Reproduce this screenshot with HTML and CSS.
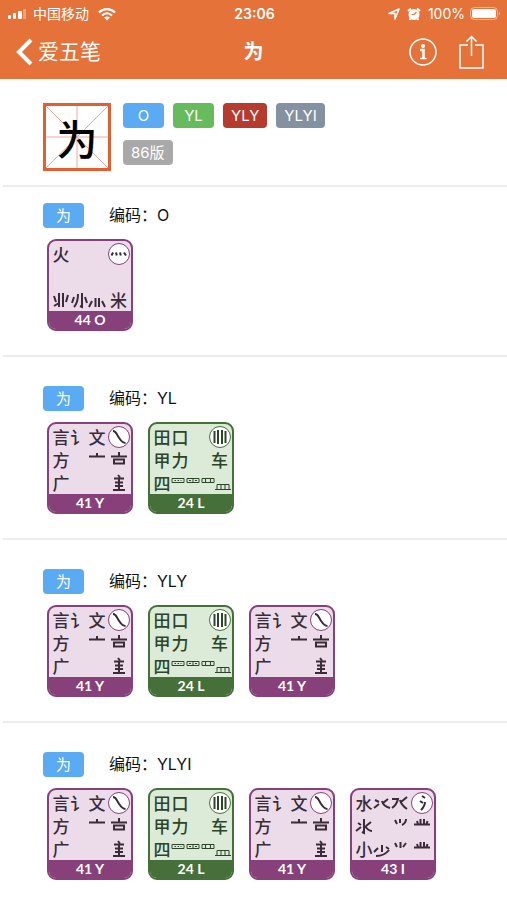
FILE: index.html
```html
<!DOCTYPE html>
<html lang="zh-CN">
<head>
    <meta charset="UTF-8">
    <meta name="viewport" content="width=device-width, initial-scale=1.0">
    <title>爱五笔 - 为</title>
    <link rel="stylesheet" href="styles.css">
</head>
<body>
    <!-- root shapes that have no character of their own -->
    <svg class="sprite" aria-hidden="true">
        <symbol id="dot4" viewBox="1 1 20 20"><path d="M3.500 12.500l1.500-3M8 9.500l.8 3M12 9.500l.8 3M16 9.500l2 3"/></symbol>
        <symbol id="na" viewBox="1 1 20 20"><path d="M5 5c3 0 3.500 3 5.500 6s3.500 6 7 6"/></symbol>
        <symbol id="bars4" viewBox="1 1 20 20"><path d="M5.500 5v12M9 4v14M13 4v14M16.500 5v12"/></symbol>
        <symbol id="water3" viewBox="1 1 20 20"><path d="M11 4l3 2M9 9l3 2M14 10c0 4-2 6-4 8"/></symbol>
        <symbol id="ye" viewBox="0 0 18 18"><path d="M2 5l2 6M7 2v14M11 2v14M16 4l-2 7M7 12L2 15"/></symbol>
        <symbol id="xiaoLeft" viewBox="0 0 18 18"><path d="M4 6l-2 6M8 3c0 7-1 10-4 13M12 2v14l-2-1M15 6l2 6"/></symbol>
        <symbol id="dotsLow" viewBox="0 0 18 18"><path d="M4 10l-3 6M7.500 7v9M11 7v9M14 10l3 6"/></symbol>
        <symbol id="tou" viewBox="0 0 18 18"><path d="M9 2v3M1 5.500h16"/></symbol>
        <symbol id="touKou" viewBox="0 0 18 18"><path d="M9 1v4M1 5.500h16M4 8.500h10v4h-10z"/></symbol>
        <symbol id="zhu" viewBox="0 0 18 18"><path d="M8 1l2 2.500M9 4v12M4 4.500h10M5 8.500h8M5 12h8M3 16h12"/></symbol>
        <symbol id="boxes" viewBox="0 0 61 18">
            <path class="thin" d="M1 4.500h12v4H1zM3.500 6.500h1.500M6.500 6.500h1.500M9.500 6.500h1M16 4.500h12v4H16zM22 4.500v4M18 6.500h2M24 6.500h2M31 4.500h12v4H31zM34.500 4.500v4M39.500 4.500v4"/>
            <path class="thin" d="M44 15.500h16M46 15V10.500h12V15M50 10.500V15M54 10.500V15"/>
        </symbol>
        <symbol id="shuiA" viewBox="0 0 18 18"><path d="M2 6l4 2M1 14l5-4M15 5l-5 4M9 7c1 4 4 6 8 7"/></symbol>
        <symbol id="shuiB" viewBox="0 0 18 18"><path d="M1 5h6c-1 4-3 7-6 9M16 3l-6 5M9 6c1 4 4 7 7 9"/></symbol>
        <symbol id="shuiC" viewBox="0 0 18 18"><path d="M9 2v14l-2-1M3 6l3 2M1 14l5-4M16 5l-5 4M10 9c2 3 4 5 7 5"/></symbol>
        <symbol id="dots3" viewBox="0 0 18 18"><path d="M4 3l2 4M9 2v4M15 2c0 3-2 5-4 6"/></symbol>
        <symbol id="dots3b" viewBox="0 0 18 18"><path d="M4 3l2 4M9.500 2v6M15 3l-3 4"/></symbol>
        <symbol id="xing" viewBox="0 0 18 18"><path d="M4 4l1 3M7.500 2v5M11 2v5M14.500 4l-1 3M1 7.500h16"/></symbol>
        <symbol id="shao" viewBox="0 0 18 18"><path d="M9 5v7M5 8l-4 4M13 7l3 2M16 10c-3 4-7 6-13 6"/></symbol>
    </svg>

    <header class="header">
        <div class="status">
            <div class="status-side">
                <svg width="20" height="12" viewBox="0 0 20 12" fill="#fff">
                    <rect x="0" y="7" width="3" height="4" rx="1"/>
                    <rect x="5" y="5" width="3" height="6" rx="1"/>
                    <rect x="10" y="3" width="4" height="8" rx="1"/>
                    <rect x="15" y="1" width="3" height="10" rx="1" opacity=".35"/>
                </svg>
                <span>中国移动</span>
                <svg class="wifi" width="18" height="14" viewBox="0 0 18 14" fill="none" stroke="#fff" stroke-width="2.200">
                    <path d="M1 5.500c4.500-4.500 11.500-4.500 16 0M4 8.500c3-3 7-3 10 0"/>
                    <path d="M9 13.500L6 10.500q3-2 6 0z" fill="#fff" stroke="none"/>
                </svg>
            </div>
            <span class="time">23:06</span>
            <div class="status-side right">
                <svg width="12" height="12" viewBox="0 0 12 12" fill="none" stroke="#fff" stroke-width="1.500" stroke-linejoin="round">
                    <path d="M11 1L7 11V5.500H1z"/>
                </svg>
                <svg class="alarm" width="14" height="14" viewBox="0 0 14 14">
                    <circle cx="7" cy="7.500" r="5.500" fill="#fff"/>
                    <path d="M1 4l3-2.500M13 4l-3-2.500M3.500 11.500L2.500 13M10.500 11.500l1 1.500" stroke="#fff" stroke-width="2"/>
                    <path d="M9.500 5L7 7.500H4.500" fill="none" stroke="#e57239" stroke-width="1.200"/>
                </svg>
                <span>100%</span>
                <svg width="31" height="14" viewBox="0 0 31 14">
                    <rect x=".5" y=".5" width="27" height="12" rx="4" fill="none" stroke="#fff" opacity=".5"/>
                    <rect x="2" y="2" width="24" height="9" rx="2" fill="#fff"/>
                    <path d="M29 4.500q2 2 0 4z" fill="#fff" opacity=".6"/>
                </svg>
            </div>
        </div>
        <nav class="nav">
            <a class="back" href="#">
                <svg width="18" height="28" viewBox="0 0 18 28" fill="none" stroke="#fff" stroke-width="4">
                    <path d="M16 2L4 14l12 12"/>
                </svg>
                爱五笔
            </a>
            <h1 class="title">为</h1>
            <div class="actions">
                <button type="button" aria-label="信息">
                    <svg width="28" height="34" viewBox="0 0 28 34" fill="none" stroke="#fff">
                        <circle cx="14" cy="17" r="13" stroke-width="1.500"/>
                        <circle cx="14" cy="11" r="2" fill="#fff" stroke="none"/>
                        <path d="M11 15h3.500V23" stroke-width="2.500"/>
                        <path d="M11 23.500h6.500" stroke-width="1.500"/>
                    </svg>
                </button>
                <button type="button" aria-label="分享">
                    <svg width="26" height="34" viewBox="0 0 26 34" fill="none" stroke="#fff" stroke-width="1.500">
                        <path d="M9 10H1v23h23V10h-8M12.500 21V2M7.500 6.500l5-5 5 5"/>
                    </svg>
                </button>
            </div>
        </nav>
    </header>

    <main>
        <section class="summary">
            <div class="char-box">
                <svg viewBox="0 0 62 62" fill="none" stroke="#f0aaa2">
                    <path d="M0 31h62M31 0v62M0 0l62 62M62 0L0 62"/>
                </svg>
                <span>为</span>
            </div>
            <div class="tags">
                <div class="tag-row">
                    <span class="tag blue">O</span>
                    <span class="tag green">YL</span>
                    <span class="tag red">YLY</span>
                    <span class="tag slate">YLYI</span>
                </div>
                <div class="tag-row">
                    <span class="tag gray">86版</span>
                </div>
            </div>
        </section>

        <section class="code first">
            <h2 class="code-title"><span class="tag blue">为</span>编码：O</h2>
            <div class="keys">
                <div class="key purple">
                    <div class="face">
                        <span>火</span><i></i><i></i><svg class="stroke"><use href="#dot4"/></svg>
                        <i></i><i></i><i></i><i></i>
                        <svg><use href="#ye"/></svg><svg><use href="#xiaoLeft"/></svg><svg><use href="#dotsLow"/></svg><span>米</span>
                    </div>
                    <div class="foot">44 O</div>
                </div>
            </div>
        </section>

        <section class="code">
            <h2 class="code-title"><span class="tag blue">为</span>编码：YL</h2>
            <div class="keys">
                <div class="key purple">
                    <div class="face">
                        <span>言</span><span>讠</span><span>文</span><svg class="stroke"><use href="#na"/></svg>
                        <span>方</span><i></i><svg><use href="#tou"/></svg><svg><use href="#touKou"/></svg>
                        <span>广</span><i></i><i></i><svg><use href="#zhu"/></svg>
                    </div>
                    <div class="foot">41 Y</div>
                </div>
                <div class="key leaf">
                    <div class="face">
                        <span>田</span><span>口</span><i></i><svg class="stroke"><use href="#bars4"/></svg>
                        <span>甲</span><span>力</span><i></i><span>车</span>
                        <span>四</span><svg class="wide"><use href="#boxes"/></svg>
                    </div>
                    <div class="foot">24 L</div>
                </div>
            </div>
        </section>

        <section class="code">
            <h2 class="code-title"><span class="tag blue">为</span>编码：YLY</h2>
            <div class="keys">
                <div class="key purple">
                    <div class="face">
                        <span>言</span><span>讠</span><span>文</span><svg class="stroke"><use href="#na"/></svg>
                        <span>方</span><i></i><svg><use href="#tou"/></svg><svg><use href="#touKou"/></svg>
                        <span>广</span><i></i><i></i><svg><use href="#zhu"/></svg>
                    </div>
                    <div class="foot">41 Y</div>
                </div>
                <div class="key leaf">
                    <div class="face">
                        <span>田</span><span>口</span><i></i><svg class="stroke"><use href="#bars4"/></svg>
                        <span>甲</span><span>力</span><i></i><span>车</span>
                        <span>四</span><svg class="wide"><use href="#boxes"/></svg>
                    </div>
                    <div class="foot">24 L</div>
                </div>
                <div class="key purple">
                    <div class="face">
                        <span>言</span><span>讠</span><span>文</span><svg class="stroke"><use href="#na"/></svg>
                        <span>方</span><i></i><svg><use href="#tou"/></svg><svg><use href="#touKou"/></svg>
                        <span>广</span><i></i><i></i><svg><use href="#zhu"/></svg>
                    </div>
                    <div class="foot">41 Y</div>
                </div>
            </div>
        </section>

        <section class="code">
            <h2 class="code-title"><span class="tag blue">为</span>编码：YLYI</h2>
            <div class="keys">
                <div class="key purple">
                    <div class="face">
                        <span>言</span><span>讠</span><span>文</span><svg class="stroke"><use href="#na"/></svg>
                        <span>方</span><i></i><svg><use href="#tou"/></svg><svg><use href="#touKou"/></svg>
                        <span>广</span><i></i><i></i><svg><use href="#zhu"/></svg>
                    </div>
                    <div class="foot">41 Y</div>
                </div>
                <div class="key leaf">
                    <div class="face">
                        <span>田</span><span>口</span><i></i><svg class="stroke"><use href="#bars4"/></svg>
                        <span>甲</span><span>力</span><i></i><span>车</span>
                        <span>四</span><svg class="wide"><use href="#boxes"/></svg>
                    </div>
                    <div class="foot">24 L</div>
                </div>
                <div class="key purple">
                    <div class="face">
                        <span>言</span><span>讠</span><span>文</span><svg class="stroke"><use href="#na"/></svg>
                        <span>方</span><i></i><svg><use href="#tou"/></svg><svg><use href="#touKou"/></svg>
                        <span>广</span><i></i><i></i><svg><use href="#zhu"/></svg>
                    </div>
                    <div class="foot">41 Y</div>
                </div>
                <div class="key purple">
                    <div class="face">
                        <span>水</span><svg><use href="#shuiA"/></svg><svg><use href="#shuiB"/></svg><svg class="stroke"><use href="#water3"/></svg>
                        <svg><use href="#shuiC"/></svg><i></i><svg><use href="#dots3"/></svg><svg><use href="#xing"/></svg>
                        <span>小</span><svg><use href="#shao"/></svg><svg><use href="#dots3b"/></svg><svg><use href="#xing"/></svg>
                    </div>
                    <div class="foot">43 I</div>
                </div>
            </div>
        </section>
    </main>
</body>
</html>
```

FILE: styles.css
```css
* {
    box-sizing: border-box;
}
body {
    margin: 0;
    background-color: #fff;
    color: #111;
    font-family: Inter, "Noto Sans CJK SC", sans-serif;
}
svg {
    display: block;
    flex: none;
}
.sprite {
    position: absolute;
    width: 0;
    height: 0;
}

/* header */
.header {
    background-color: #e57239;
    color: #fff;
    height: 79px;
}
.status, .nav {
    display: grid;
    grid-template-columns: 1fr auto 1fr;
    align-items: center;
}
.status {
    height: 27px;
    padding: 0 6px 0 8px;
    font-size: 14px;
    line-height: 20px;
}
.status-side {
    display: flex;
    align-items: center;
    gap: 5px;
}
.status-side.right {
    justify-content: flex-end;
}
.wifi {
    margin-left: 4px;
}
.alarm {
    margin: 0 2px;
}
.time {
    font-size: 14px;
    font-weight: 600;
}
.nav {
    height: 50px;
    padding: 0 15px;
}
.back {
    display: flex;
    align-items: center;
    gap: 5px;
    color: #fff;
    font-size: 21px;
    line-height: 28px;
    text-decoration: none;
}
.title {
    margin: 0;
    font-size: 20px;
    font-weight: 700;
    line-height: 28px;
}
.actions {
    display: flex;
    justify-content: flex-end;
    gap: 22px;
    padding-right: 7px;
}
.actions button {
    padding: 0;
    border: none;
    background: none;
    cursor: pointer;
}

/* summary */
.summary {
    display: flex;
    gap: 12px;
    padding: 24px 43px 14px;
}
.char-box {
    display: grid;
    place-items: center;
    width: 68px;
    height: 68px;
    border: 3px solid #e2602f;
    color: #000;
    font-family: "Noto Sans CJK SC", sans-serif;
    font-size: 41px;
    font-weight: 500;
    line-height: 62px;
}
.char-box svg, .char-box span {
    grid-area: 1 / 1;
}
.char-box svg {
    width: 100%;
}
.char-box span {
    z-index: 1;
}
.tags {
    display: flex;
    flex-direction: column;
    gap: 12px;
}
.tag-row {
    display: flex;
    gap: 9px;
}
.tag {
    min-width: 41px;
    height: 25px;
    padding: 0 8px;
    border-radius: 4px;
    color: #fff;
    font-size: 15px;
    line-height: 25px;
    text-align: center;
}
.blue {
    background-color: #5aabf3;
}
.green {
    background-color: #66bb5c;
}
.red {
    background-color: #b63a2e;
}
.slate {
    background-color: #8391a1;
}
.gray {
    background-color: #a9a9a9;
}

/* code sections */
.code {
    margin-left: 3px;
    padding: 29px 0 24px 40px;
    border-top: 2px solid #ededed;
}
.code.first {
    padding-top: 16px;
}
.code:last-child {
    padding-bottom: 16px;
}
.code-title {
    display: flex;
    align-items: center;
    gap: 25px;
    height: 25px;
    margin: 0 0 11px;
    font-size: 16px;
    font-weight: 400;
    line-height: 25px;
}
.keys {
    display: flex;
    gap: 15px;
    padding-left: 4px;
}

/* keyboard key */
.key {
    width: 86px;
    border: 2px solid;
    border-radius: 9px;
    overflow: hidden;
}
.purple {
    border-color: #874079;
    background-color: #ecdce9;
}
.purple .foot {
    background-color: #874079;
}
.leaf {
    border-color: #467039;
    background-color: #dbebd7;
}
.leaf .foot {
    background-color: #467039;
}
.face {
    display: grid;
    grid-template-columns: 18px 18px 18px 1fr;
    grid-auto-rows: 23px;
    align-items: center;
    justify-items: center;
    height: 70px;
    padding: 1px 0 0 3px;
    color: #3a2b39;
    font-family: "Noto Sans CJK SC", sans-serif;
    font-size: 17px;
    font-weight: 500;
    line-height: 23px;
}
.face svg {
    width: 18px;
    height: 18px;
    fill: none;
    stroke: #3a2b39;
    stroke-width: 2px;
}
.face .stroke {
    width: 22px;
    height: 22px;
    border: 1px solid #874079;
    border-radius: 50%;
    background-color: #fff;
}
.face .wide {
    grid-column: 2 / 5;
    width: 61px;
}
.thin {
    stroke-width: 1px;
}
.leaf .face {
    color: #2c4427;
}
.leaf .face svg {
    stroke: #2c4427;
}
.leaf .face .stroke {
    border-color: #467039;
}
.foot {
    height: 18px;
    color: #fff;
    font-family: Lato, sans-serif;
    font-size: 14px;
    font-weight: 700;
    line-height: 18px;
    text-align: center;
}
```
